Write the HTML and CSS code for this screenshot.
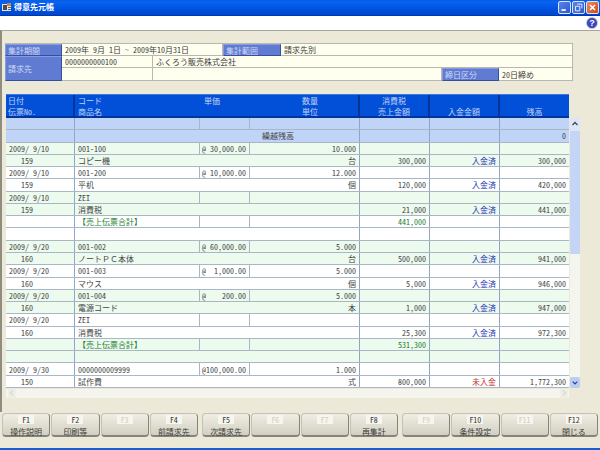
FILE: index.html
```html
<!DOCTYPE html>
<html lang="ja">
<head>
<meta charset="utf-8">
<title>得意先元帳</title>
<link rel="stylesheet" href="styles.css">
</head>
<body>
<div class="window">
  <header class="titlebar">
    <svg class="appicon" viewBox="0 0 10 10"><rect x="0" y="2" width="9" height="7" fill="#e8e4d8"/><rect x="1" y="3" width="4" height="5" fill="#4a4a58"/><rect x="5" y="1" width="4" height="3" fill="#d08040"/><rect x="6" y="5" width="3" height="1" fill="#666"/><rect x="6" y="7" width="3" height="1" fill="#666"/></svg>
    <span class="titletext">得意先元帳</span>
    <div class="winbtns">
      <span class="wb"><svg viewBox="0 0 13 13"><rect x="3" y="8.500" width="5" height="2" fill="#fff"/></svg></span>
      <span class="wb"><svg viewBox="0 0 13 13"><path d="M5 2.500h5.500v5M3 5h5v5.500H3z" fill="none" stroke="#fff" stroke-width="1"/></svg></span>
      <span class="wb close"><svg viewBox="0 0 13 13"><path d="M3.500 3.500l6 6M9.500 3.500l-6 6" stroke="#fff" stroke-width="1.800"/></svg></span>
    </div>
  </header>
  <div class="toolbar">
    <svg class="help" viewBox="0 0 12 12"><circle cx="6" cy="6" r="5.500" fill="#3c46b8"/><circle cx="6" cy="6" r="5.500" fill="none" stroke="#c8cce8" stroke-width=".8"/><text x="6" y="9.200" text-anchor="middle" class="helpq">?</text></svg>
  </div>
  <main class="main">
    <section class="info">
      <div class="lab">集計期間</div><div class="val s2">2009年 9月 1日 ～ 2009年10月31日</div><div class="lab">集計範囲</div><div class="val s3">請求先別</div>
      <div class="lab r2">請求先</div><div class="val">0000000000100</div><div class="val s5">ふくろう販売株式会社</div>
      <div class="val"></div><div class="val s3"></div><div class="lab">締日区分</div><div class="val">20日締め</div>
    </section>
    <section class="ledger">
      <div class="thead">
        <div class="th"><span>日付</span><span>伝票No.</span></div>
        <div class="th wide">
          <span class="h3"><span>コード</span><span>単価</span><span>数量</span></span>
          <span class="h3"><span>商品名</span><span></span><span>単位</span></span>
        </div>
        <div class="th c"><span>消費税</span><span>売上金額</span></div>
        <div class="th c"><span></span><span>入金金額</span></div>
        <div class="th c end"><span></span><span>残高</span></div>
      </div>
      <div class="tbody">
        <div class="row b"><i></i><i></i><i></i><i></i><i></i><i></i><i></i></div>
        <div class="row b"><i></i><i class="m carry">繰越残高</i><i></i><i></i><i class="n">0</i></div>

        <div class="row g"><i>2009/ 9/10</i><i>001-100</i><i>@ 30,000.00</i><i class="n">10.000</i><i></i><i></i><i></i></div>
        <div class="row g"><i class="no">159</i><i class="m"><span>コピー機</span><span>台</span></i><i class="n">300,000</i><i class="n pd">入金済</i><i class="n">300,000</i></div>
        <div class="row"><i>2009/ 9/10</i><i>001-200</i><i>@ 10,000.00</i><i class="n">12.000</i><i></i><i></i><i></i></div>
        <div class="row"><i class="no">159</i><i class="m"><span>平机</span><span>個</span></i><i class="n">120,000</i><i class="n pd">入金済</i><i class="n">420,000</i></div>
        <div class="row g"><i>2009/ 9/10</i><i>ZEI</i><i></i><i></i><i></i><i></i><i></i></div>
        <div class="row g"><i class="no">159</i><i class="m"><span>消費税</span></i><i class="n">21,000</i><i class="n pd">入金済</i><i class="n">441,000</i></div>
        <div class="row"><i></i><i class="tot">【売上伝票合計】</i><i></i><i></i><i class="n tot">441,000</i><i></i><i></i></div>
        <div class="row"><i></i><i class="m"></i><i></i><i></i><i></i></div>

        <div class="row g"><i>2009/ 9/20</i><i>001-002</i><i>@ 60,000.00</i><i class="n">5.000</i><i></i><i></i><i></i></div>
        <div class="row g"><i class="no">160</i><i class="m"><span class="fw">ノートＰＣ本体</span><span>台</span></i><i class="n">500,000</i><i class="n pd">入金済</i><i class="n">941,000</i></div>
        <div class="row"><i>2009/ 9/20</i><i>001-003</i><i>@  1,000.00</i><i class="n">5.000</i><i></i><i></i><i></i></div>
        <div class="row"><i class="no">160</i><i class="m"><span>マウス</span><span>個</span></i><i class="n">5,000</i><i class="n pd">入金済</i><i class="n">946,000</i></div>
        <div class="row g"><i>2009/ 9/20</i><i>001-004</i><i>@    200.00</i><i class="n">5.000</i><i></i><i></i><i></i></div>
        <div class="row g"><i class="no">160</i><i class="m"><span>電源コード</span><span>本</span></i><i class="n">1,000</i><i class="n pd">入金済</i><i class="n">947,000</i></div>
        <div class="row"><i>2009/ 9/20</i><i>ZEI</i><i></i><i></i><i></i><i></i><i></i></div>
        <div class="row"><i class="no">160</i><i class="m"><span>消費税</span></i><i class="n">25,300</i><i class="n pd">入金済</i><i class="n">972,300</i></div>
        <div class="row g"><i></i><i class="tot">【売上伝票合計】</i><i></i><i></i><i class="n tot">531,300</i><i></i><i></i></div>
        <div class="row g"><i></i><i class="m"></i><i></i><i></i><i></i></div>

        <div class="row"><i>2009/ 9/30</i><i>0000000009999</i><i>@100,000.00</i><i class="n">1.000</i><i></i><i></i><i></i></div>
        <div class="row"><i class="no">150</i><i class="m"><span>試作費</span><span>式</span></i><i class="n">800,000</i><i class="n un">未入金</i><i class="n">1,772,300</i></div>
      </div>
      <div class="vscroll">
        <span class="vup"><svg viewBox="0 0 10 12"><path d="M2.500 7l2.500-2.500L7.500 7" fill="none" stroke="#445" stroke-width="1.300"/></svg></span>
        <span class="vthumb"></span>
        <span class="vtrack"></span>
        <span class="vdown"><svg viewBox="0 0 10 12"><path d="M2.500 5l2.500 2.500L7.500 5" fill="none" stroke="#2340a0" stroke-width="1.300"/></svg></span>
      </div>
      <div class="hscroll">
        <span class="ha"><svg viewBox="0 0 8 8"><path d="M5 1.500L2.500 4 5 6.500" fill="none" stroke="#c8c8c0" stroke-width="1"/></svg></span>
        <span class="ha"><svg viewBox="0 0 8 8"><path d="M3 1.500L5.500 4 3 6.500" fill="none" stroke="#c8c8c0" stroke-width="1"/></svg></span>
      </div>
    </section>
  </main>
  <footer class="fkeys">
    <div class="fgroup">
      <div class="fk"><span class="key">F1</span><span>操作説明</span></div>
      <div class="fk"><span class="key">F2</span><span>印刷等</span></div>
      <div class="fk off"><span class="key">F3</span><span></span></div>
      <div class="fk"><span class="key">F4</span><span>前請求先</span></div>
    </div>
    <div class="fgroup">
      <div class="fk"><span class="key">F5</span><span>次請求先</span></div>
      <div class="fk off"><span class="key">F6</span><span></span></div>
      <div class="fk off"><span class="key">F7</span><span></span></div>
      <div class="fk"><span class="key">F8</span><span>再集計</span></div>
    </div>
    <div class="fgroup">
      <div class="fk off"><span class="key">F9</span><span></span></div>
      <div class="fk"><span class="key">F10</span><span>条件設定</span></div>
      <div class="fk off"><span class="key">F11</span><span></span></div>
      <div class="fk"><span class="key">F12</span><span>閉じる</span></div>
    </div>
  </footer>
  <div class="winbottom"></div>
</div>
</body>
</html>
```
FILE: styles.css
```css
* { box-sizing: border-box; }
html, body { margin: 0; padding: 0; }
body {
  width: 600px; height: 450px; overflow: hidden;
  background: #ece9d8;
  font-family: "Noto Sans CJK JP", sans-serif;
  font-size: 8px;
  font-feature-settings: "hwid";
  color: #444;
}
.window { width: 600px; height: 450px; display: flex; flex-direction: column; }

.titlebar {
  height: 16px; flex: none;
  display: flex; align-items: center;
  padding: 0 1px 1px 2px;
  background: linear-gradient(#0a5ee8 0, #0a62f0 15%, #0052e0 60%, #0046cc 100%);
  border-bottom: 1px solid #0038b0;
}
.appicon { width: 10px; height: 10px; margin-right: 2px; }
.titletext { color: #fff; font-size: 8px; font-weight: 700; line-height: 14px; font-feature-settings: normal; }
.winbtns { margin-left: auto; display: flex; gap: 1px; }
.wb {
  width: 13px; height: 13px; display: block;
  border: 1px solid #d8e4f8; border-radius: 2px;
  background: linear-gradient(135deg, #5a84e8, #2c58d0);
  overflow: hidden;
}
.wb svg { display: block; width: 11px; height: 11px; }
.wb.close { background: linear-gradient(135deg, #e88c68, #d04818); }

.toolbar {
  height: 14px; flex: none;
  background: #fff;
  display: flex; justify-content: flex-end; align-items: center;
  padding-right: 2px;
}
.help { width: 12px; height: 12px; display: block; }
.helpq { fill: #fff; font-size: 9px; font-weight: 700; font-family: "Liberation Sans", sans-serif; }

.main {
  height: 382px; flex: none;
  border-top: 1px solid #a8a698;
  border-left: 2px solid #8f8d80;
  padding: 12px 0 0 3px;
}

.info {
  width: 568px;
  display: grid;
  grid-template-columns: 57px 91px 70px 58px 161px 57px 74px;
  grid-template-rows: 12px 12px 13px;
  background: #fffff0;
  border: 1px solid #b8b8ae;
  border-width: 1px 1px 0 0;
  line-height: 11px;
}
.lab {
  background: #5f7bd2;
  border: 1px solid #8a9ce0;
  border-right-color: #36509e;
  border-bottom-color: #36509e;
  color: #cfd8f2;
  padding-left: 2px;
  display: flex; align-items: center;
}
.r2 { grid-row: span 2; }
.val {
  border-right: 1px solid #b8b8ae;
  border-bottom: 1px solid #b8b8ae;
  padding-left: 3px;
  color: #3c3c3c;
  display: flex; align-items: center;
  white-space: pre;
}
.s2 { grid-column: span 2; }
.s3 { grid-column: span 3; }
.s5 { grid-column: span 5; }

.ledger {
  margin: 13px 0 0 1px;
  display: grid;
  grid-template-columns: 563px 11px;
  grid-template-rows: 24px 270px 10px;
}
.thead {
  display: grid;
  grid-template-columns: 69px 285px 70px 70px 69px;
  background: #0350d8;
  border-top: 1px solid #3d78dc;
  border-bottom: 2px solid #02349c;
}
.th {
  color: #c0d2f4;
  display: flex; flex-direction: column;
  justify-content: space-around;
  padding-left: 2px;
  border-right: 2px solid #02349c;
  line-height: 11px;
}
.th.wide { padding-left: 3px; }
.th.c { text-align: center; padding-left: 0; }
.th.c.end { border-right: 0; }
.th span:empty { min-height: 11px; }
.h3 { display: grid; grid-template-columns: 126px 98px 1fr; min-height: 11px; }

.tbody {
  grid-row: 2; grid-column: 1;
  display: grid;
  grid-auto-rows: 1fr;
  height: 270px;
}
.row {
  display: grid;
  grid-template-columns: 69px 125px 50px 110px 70px 70px 69px;
  border-bottom: 1px solid #a9b6c6;
  background: #fff;
  line-height: 11px;
  min-height: 0;
}
.row.g { background: #edfaee; }
.row.b { background: #c0d4f8; }
.row i {
  font-style: normal;
  white-space: pre;
  border-right: 1px solid #a9b6c6;
  padding: 0 2px 0 3px;
  overflow: hidden;
  display: flex; align-items: center;
}
.row i:first-child { border-right-color: #8ea6d2; }
.row i:last-child { border-right: 0; }
.row i:nth-last-child(4), .row i:nth-last-child(3), .row i:nth-last-child(2) { border-right-color: #92a3c4; }
.row i.m { grid-column: span 3; justify-content: space-between; padding-right: 3px; }
.row i.n { justify-content: flex-end; padding-right: 3px; }
.row i.no { padding-left: 15px; }
.row i.carry { justify-content: flex-end; padding-right: 65px; }
.row i.pd { color: #2a38b4; }
.row i.un { color: #c43434; }
.row i.tot { color: #1c7c30; }
.row i:nth-child(3):not(.n) { padding-left: 2px; }
.fw { font-feature-settings: normal; }

.vscroll {
  grid-row: 2 / span 1; grid-column: 2;
  display: flex; flex-direction: column;
  padding-left: 1px;
}
.vup { height: 13px; background: #dde6f8; display: block; }
.vthumb { height: 123px; background: #c5d5f6; display: block; }
.vtrack { flex: 1; background: #f5f5ef; display: block; }
.vdown { height: 11px; background: #bccdf4; display: block; border-radius: 2px; }
.vscroll svg { display: block; width: 10px; height: 12px; }
.vdown svg { height: 11px; }

.hscroll {
  grid-row: 3; grid-column: 1;
  height: 9px; margin-top: 1px;
  background: #f5f4ed;
  display: flex; justify-content: space-between;
  padding: 0 1px 0 2px;
}
.ha { width: 8px; height: 9px; background: #efeee6; display: block; }
.ha svg { display: block; width: 8px; height: 8px; }

.fkeys {
  height: 36px; flex: none;
  display: flex; justify-content: space-between;
  padding: 1px 2px 0 2px;
  align-items: flex-start;
}
.fgroup { display: flex; gap: 1px; width: 196px; }
.fk {
  flex: 1; height: 24px;
  display: flex; flex-direction: column; align-items: center;
  border-radius: 4px;
  background: linear-gradient(#f0eee4, #dedcce 60%, #d2d0c2);
  border: 1px solid #c4c2b4;
  border-bottom: 2px solid #86847a;
  border-right-color: #86847a;
  color: #3a3a3a;
  line-height: 11px;
  padding-top: 1px;
}
.key {
  min-width: 16px; height: 9px; line-height: 9px;
  text-align: center;
  background: #f6f5ee;
  margin-bottom: 2px;
}
.off { color: #d0cec2; }
.winbottom {
  flex: none; height: 2px;
  background: #1a5ed0;
}
```
